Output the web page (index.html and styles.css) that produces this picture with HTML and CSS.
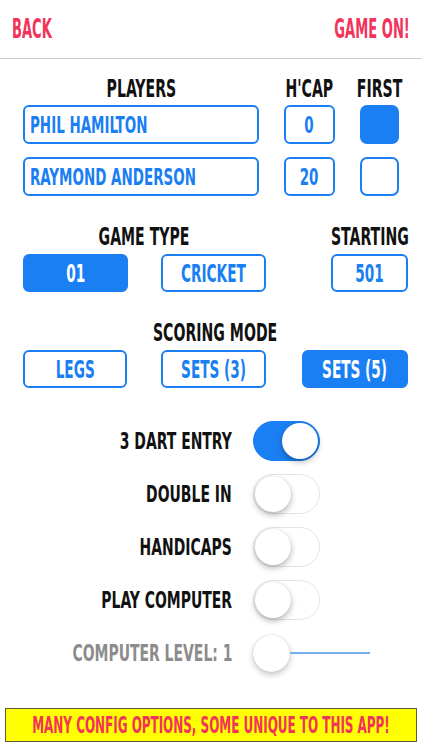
FILE: index.html
```html
<!DOCTYPE html>
<html>
<head>
<meta charset="utf-8">
<link rel="stylesheet" href="styles.css">
</head>
<body>
<div class="topbar">
  <span class="c l red hdr">BACK</span>
  <span class="c r red hdr">GAME ON!</span>
</div>

<div class="players">
  <div class="prow labels">
    <div class="lab"><span class="c">PLAYERS</span></div>
    <div class="lab"><span class="c">H'CAP</span></div>
    <div class="lab"><span class="c">FIRST</span></div>
  </div>
  <div class="prow first">
    <div class="box name"><span class="c l">PHIL HAMILTON</span></div>
    <div class="box num"><span class="c">0</span></div>
    <div class="check on"></div>
  </div>
  <div class="prow second">
    <div class="box name"><span class="c l">RAYMOND ANDERSON</span></div>
    <div class="box num"><span class="c">20</span></div>
    <div class="check"></div>
  </div>
</div>

<div class="gametype">
  <div class="lab span12"><span class="c">GAME TYPE</span></div>
  <div class="lab col3"><span class="c">STARTING</span></div>
  <div class="btn fill col1"><span class="c">01</span></div>
  <div class="btn col2"><span class="c">CRICKET</span></div>
  <div class="btn col3"><span class="c">501</span></div>
</div>

<div class="scoring">
  <div class="lab full"><span class="c">SCORING MODE</span></div>
  <div class="btn col1"><span class="c">LEGS</span></div>
  <div class="btn col2"><span class="c">SETS (3)</span></div>
  <div class="btn fill col3"><span class="c">SETS (5)</span></div>
</div>

<div class="options">
  <div class="opt">
    <div class="olab"><span class="c r">3 DART ENTRY</span></div>
    <div class="switch on"><div class="knob"></div></div>
  </div>
  <div class="opt">
    <div class="olab"><span class="c r">DOUBLE IN</span></div>
    <div class="switch"><div class="knob"></div></div>
  </div>
  <div class="opt">
    <div class="olab"><span class="c r">HANDICAPS</span></div>
    <div class="switch"><div class="knob"></div></div>
  </div>
  <div class="opt">
    <div class="olab"><span class="c r">PLAY COMPUTER</span></div>
    <div class="switch"><div class="knob"></div></div>
  </div>
  <div class="opt">
    <div class="olab gray"><span class="c r">COMPUTER LEVEL: 1</span></div>
    <div class="slider"><div class="thumb"></div><div class="track"></div></div>
  </div>
</div>

<div class="banner"><span class="c">MANY CONFIG OPTIONS, SOME UNIQUE TO THIS APP!</span></div>
</body>
</html>
```

FILE: styles.css
```css
* { box-sizing: border-box; }
html, body { margin: 0; padding: 0; background: #ffffff; }
body {
  width: 422px;
  height: 750px;
  overflow: hidden;
  font-family: "DejaVu Sans", "Liberation Sans", sans-serif;
  font-weight: bold;
  font-stretch: condensed;
  color: #111111;
  font-size: 23px;
  --sx: 0.68;
}

.c {
  display: inline-block;
  white-space: nowrap;
  transform: scaleX(var(--sx));
  transform-origin: center;
}
.c.l { transform-origin: left center; }
.c.r { transform-origin: right center; }

.red { color: #f2335b; }

.topbar {
  height: 59px;
  border-bottom: 1px solid #cccccc;
  display: flex;
  justify-content: space-between;
  align-items: center;
  padding: 0 12px 0 12px;
}
.hdr { font-size: 26px; --sx: 0.56; }

.lab {
  display: flex;
  justify-content: center;
  align-items: center;
  height: 24px;
  white-space: nowrap;
  font-size: 24.5px;
  --sx: 0.64;
}

.players { padding-left: 23px; }
.prow {
  display: grid;
  grid-template-columns: 236px 51px 39px;
  column-gap: 25px;
}
.prow.labels { margin-top: 17px; }
.prow.first { margin-top: 5px; }
.prow.second { margin-top: 13px; }

.box {
  height: 39px;
  border: 2px solid #1a7ff2;
  border-radius: 6px;
  color: #1a7ff2;
  display: flex;
  align-items: center;
  font-size: 22.5px;
  --sx: 0.665;
}
.box.name { padding-left: 5px; }
.box.num { justify-content: center; }
.check {
  height: 39px;
  border: 2px solid #1a7ff2;
  border-radius: 7px;
}
.check.on { background: #1a7ff2; }

.gametype, .scoring {
  display: grid;
  grid-template-columns: 105px 33px 105px 65px 77px;
  margin-left: 23px;
  width: 385px;
}
.gametype { margin-top: 28px; row-gap: 6px; }
.scoring { margin-top: 28px; row-gap: 6px; grid-template-columns: 104px 34px 105px 36px 106px; }
.span12 { grid-column: 1 / 4; }
.full { grid-column: 1 / 6; }
.col1 { grid-column: 1; }
.col2 { grid-column: 3; }
.col3 { grid-column: 5; }
.gametype .lab.col3 { grid-row: 1; }
.scoring .btn { grid-row: 2; }
.gametype .btn { grid-row: 2; }

.btn {
  height: 38px;
  border: 2px solid #1a7ff2;
  border-radius: 6px;
  color: #1a7ff2;
  display: flex;
  align-items: center;
  justify-content: center;
  font-size: 25px;
  --sx: 0.607;
  white-space: nowrap;
}
.btn.fill { background: #1a7ff2; color: #ffffff; }

.options { margin-top: 33px; }
.opt {
  display: grid;
  grid-template-columns: 232px 67px 120px;
  column-gap: 21px;
  align-items: center;
  height: 40px;
  margin-bottom: 13px;
}
.olab {
  display: flex;
  justify-content: flex-end;
  white-space: nowrap;
  font-size: 23.5px;
  --sx: 0.66;
}
.olab.gray { color: #8c8c8c; }

.switch {
  width: 67px;
  height: 40px;
  border-radius: 20px;
  border: 1.5px solid #e4e4e4;
  background: #ffffff;
  display: flex;
  align-items: center;
  padding: 0 1px;
}
.knob {
  width: 36px;
  height: 36px;
  border-radius: 50%;
  background: #ffffff;
  box-shadow: 0 3px 6px rgba(0,0,0,0.28), 0 0 1px rgba(0,0,0,0.2);
}
.switch.on {
  background: #1a7ff2;
  border-color: #1a7ff2;
  justify-content: flex-end;
}

.slider {
  display: flex;
  align-items: center;
  width: 120px;
}
.thumb {
  width: 37px;
  height: 37px;
  flex: none;
  border-radius: 50%;
  background: #ffffff;
  box-shadow: 0 3px 6px rgba(0,0,0,0.22), 0 0 1px rgba(0,0,0,0.25);
}
.track {
  width: 80px;
  height: 2px;
  background: #76aee9;
}

.banner {
  margin: 35px 5px 0 5px;
  height: 34px;
  background: #ffff00;
  border: 1.5px solid #5e5e3c;
  color: #f2335b;
  display: flex;
  align-items: center;
  justify-content: center;
  font-size: 22.5px;
  --sx: 0.59;
  white-space: nowrap;
}
```
